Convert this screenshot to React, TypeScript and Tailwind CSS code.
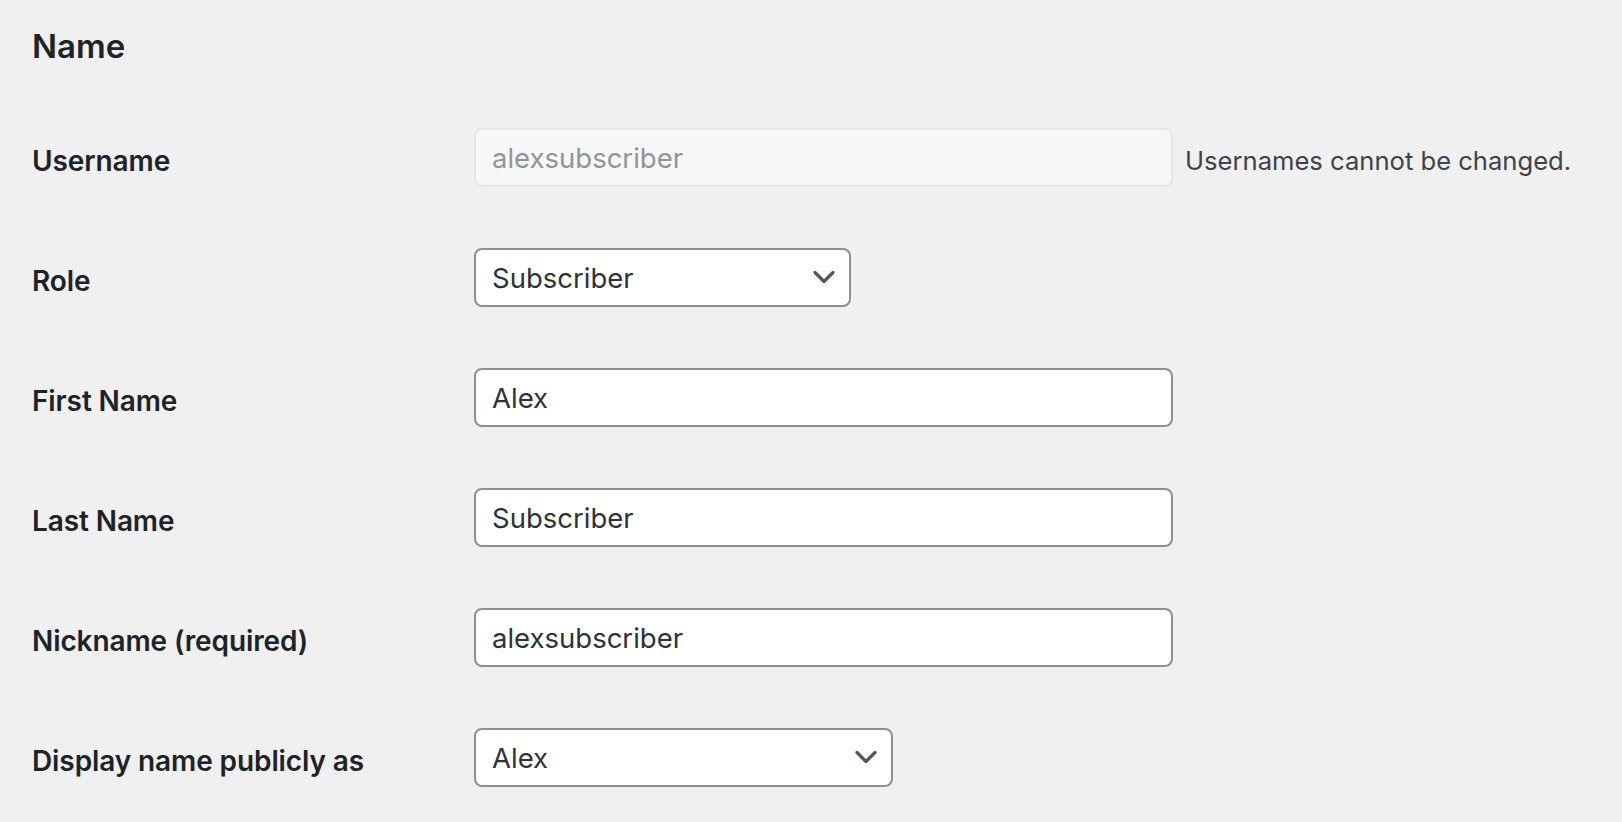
import React from "react";

const font = { fontFamily: 'Inter, "Liberation Sans", sans-serif' };

function Chevron() {
  return (
    <svg
      className="pointer-events-none absolute right-[16px] top-1/2 -translate-y-1/2"
      width="22"
      height="13"
      viewBox="0 0 22 13"
      fill="none"
    >
      <path d="M2 2l9 9 9-9" stroke="#50575e" strokeWidth="3.2" strokeLinecap="round" strokeLinejoin="round" />
    </svg>
  );
}

function Row({ label, children }: { label: string; children: React.ReactNode }) {
  return (
    <div className="flex h-[120px] items-start">
      <div className="w-[442px] shrink-0 pt-[45px] text-[28px] font-semibold leading-[1.3] tracking-[-0.1px] text-[#1d2327]">
        {label}
      </div>
      <div className="flex items-start pt-[30px]">{children}</div>
    </div>
  );
}

function TextInput({ value, disabled }: { value: string; disabled?: boolean }) {
  return (
    <input
      type="text"
      readOnly
      disabled={disabled}
      value={value}
      style={font}
      className={
        disabled
          ? "box-border h-[59px] w-[699px] rounded-[8px] border-2 border-[#e6e6e8] bg-[#f6f7f7] px-[16px] pt-[2px] text-[27.5px] text-[#929598] outline-none"
          : "box-border h-[59px] w-[699px] rounded-[8px] border-2 border-[#8c8f94] bg-white px-[16px] pt-[2px] text-[27.5px] text-[#2c3338] outline-none"
      }
    />
  );
}

function Select({ value, width }: { value: string; width: string }) {
  return (
    <div className={`relative ${width}`}>
      <select
        value={value}
        onChange={() => {}}
        style={font}
        className="box-border h-[59px] w-full appearance-none rounded-[8px] border-2 border-[#8c8f94] bg-white pl-[16px] pr-[48px] pt-[2px] text-[27.5px] text-[#2c3338] outline-none"
      >
        <option value={value}>{value}</option>
      </select>
      <Chevron />
    </div>
  );
}

export default function App() {
  return (
    <div className="min-h-screen bg-[#f0f0f1] px-[32px] pt-[25px]" style={font}>
      <h2 className="mb-[29px] text-[33px] font-semibold leading-[1.33] text-[#1d2327]">Name</h2>

      <Row label="Username">
        <TextInput value="alexsubscriber" disabled />
        <span className="ml-[12px] mt-[16px] whitespace-nowrap text-[25.6px] leading-[1.3] text-[#3c434a]">
          Usernames cannot be changed.
        </span>
      </Row>
      <Row label="Role">
        <Select value="Subscriber" width="w-[377px]" />
      </Row>
      <Row label="First Name">
        <TextInput value="Alex" />
      </Row>
      <Row label="Last Name">
        <TextInput value="Subscriber" />
      </Row>
      <Row label="Nickname (required)">
        <TextInput value="alexsubscriber" />
      </Row>
      <Row label="Display name publicly as">
        <Select value="Alex" width="w-[419px]" />
      </Row>
    </div>
  );
}
